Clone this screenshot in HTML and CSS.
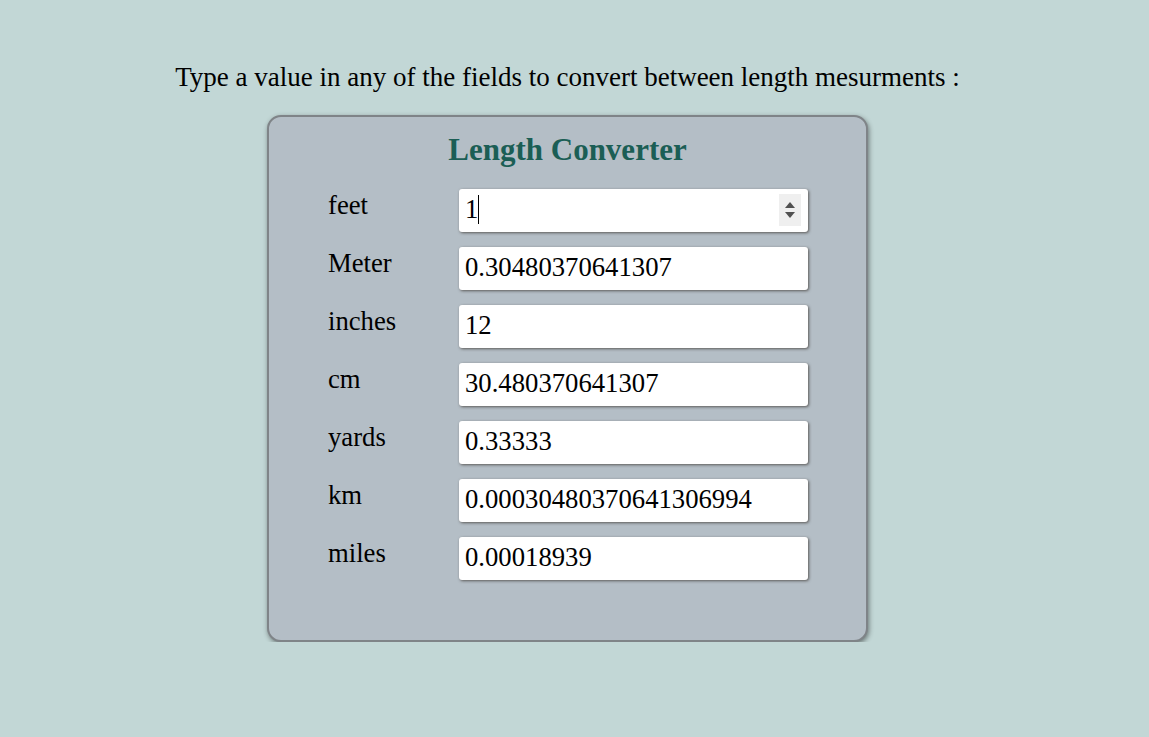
FILE: index.html
```html
<!DOCTYPE html>
<html>
<head>
<meta charset="utf-8">
<link rel="stylesheet" href="styles.css">
</head>
<body>
<div class="page">
  <p class="intro">Type a value in any of the fields to convert between length mesurments :</p>
  <div class="card">
    <h1 class="title">Length Converter</h1>
    <div class="rows">
      <div class="row">
        <label class="label">feet</label>
        <div class="field">
          <input class="input" type="text" value="1">
          <span class="caret"></span>
          <span class="spinner"><span class="up"></span><span class="down"></span></span>
        </div>
      </div>
      <div class="row">
        <label class="label">Meter</label>
        <div class="field"><input class="input" type="text" value="0.30480370641307"></div>
      </div>
      <div class="row">
        <label class="label">inches</label>
        <div class="field"><input class="input" type="text" value="12"></div>
      </div>
      <div class="row">
        <label class="label">cm</label>
        <div class="field"><input class="input" type="text" value="30.480370641307"></div>
      </div>
      <div class="row">
        <label class="label">yards</label>
        <div class="field"><input class="input" type="text" value="0.33333"></div>
      </div>
      <div class="row">
        <label class="label">km</label>
        <div class="field"><input class="input" type="text" value="0.00030480370641306994"></div>
      </div>
      <div class="row">
        <label class="label">miles</label>
        <div class="field"><input class="input" type="text" value="0.00018939"></div>
      </div>
    </div>
  </div>
</div>
</body>
</html>
```
FILE: styles.css
```css
html, body {
  margin: 0;
  padding: 0;
  background: #c2d7d6;
  font-family: "Liberation Serif", "Times New Roman", serif;
  color: #000;
}
.page {
  width: 1135px;
  display: flex;
  flex-direction: column;
  align-items: center;
  padding-top: 63px;
}
.intro {
  margin: 0 0 24px 0;
  font-size: 27px;
  line-height: 28px;
}
.card {
  box-sizing: border-box;
  width: 601px;
  height: 527px;
  background: #b4bec6;
  border: 2px solid #7f8488;
  border-radius: 14px;
  box-shadow: 1px 2px 5px rgba(0,0,0,0.45);
  padding: 16px 0 0 59px;
}
.title {
  margin: 0 0 22px -59px;
  text-align: center;
  font-family: "Liberation Serif", serif;
  font-weight: bold;
  font-size: 31px;
  line-height: 34px;
  color: #1b5e55;
}
.rows {
  display: flex;
  flex-direction: column;
  gap: 15px;
}
.row {
  display: flex;
  align-items: flex-start;
}
.label {
  width: 131px;
  font-size: 26.7px;
  line-height: 28px;
  padding-top: 2px;
}
.field {
  position: relative;
  width: 349px;
  height: 43px;
}
.input {
  box-sizing: border-box;
  width: 349px;
  height: 43px;
  border: none;
  border-radius: 3px;
  background: #fff;
  box-shadow: 1px 1px 3px rgba(60,55,50,0.75);
  font-family: "Liberation Serif", serif;
  font-size: 26.7px;
  padding: 0 6px 3px 6px;
  color: #000;
  outline: none;
}
.caret {
  position: absolute;
  left: 19px;
  top: 6px;
  width: 1px;
  height: 29px;
  background: #000;
}
.spinner {
  position: absolute;
  right: 7px;
  top: 5px;
  width: 22px;
  height: 32px;
  background: #efefef;
  display: flex;
  flex-direction: column;
  align-items: center;
  justify-content: center;
  gap: 4px;
}
.up {
  width: 0;
  height: 0;
  border-left: 5px solid transparent;
  border-right: 5px solid transparent;
  border-bottom: 6px solid #505050;
}
.down {
  width: 0;
  height: 0;
  border-left: 5px solid transparent;
  border-right: 5px solid transparent;
  border-top: 6px solid #505050;
}
```
